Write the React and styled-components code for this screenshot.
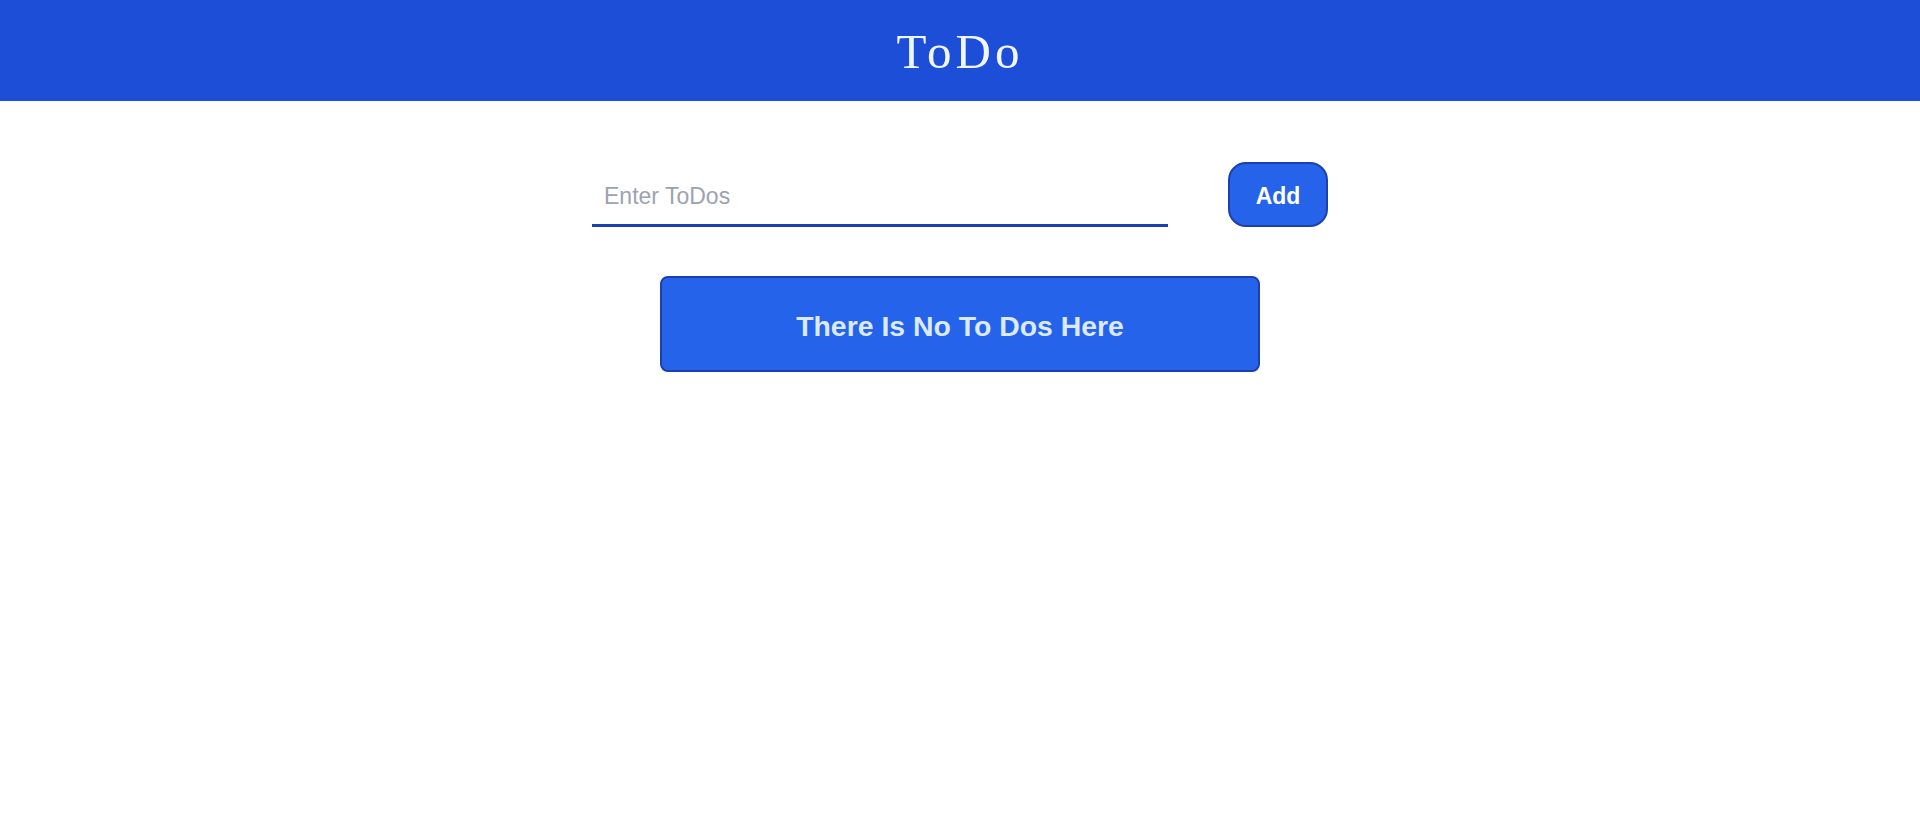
import React, { useState } from "react";
import styled, { createGlobalStyle } from "styled-components";

const GlobalStyle = createGlobalStyle`
  html, body {
    margin: 0;
    padding: 0;
    background: #ffffff;
    font-family: "Liberation Sans", Arial, sans-serif;
  }
  * { box-sizing: border-box; }
`;

const Header = styled.header`
  height: 101px;
  background: #1d4ed8;
  display: flex;
  align-items: center;
  justify-content: center;
`;

const Title = styled.h1`
  margin: 2px 0 0 0;
  font-family: "Liberation Serif", "Times New Roman", serif;
  font-weight: 400;
  font-size: 49px;
  letter-spacing: 4px;
  color: #eff6ff;
`;

const Main = styled.main`
  display: flex;
  flex-direction: column;
  align-items: center;
  padding-top: 61px;
  gap: 49px;
`;

const Form = styled.form`
  display: flex;
  align-items: flex-end;
  gap: 60px;
`;

const Input = styled.input`
  width: 576px;
  height: 60px;
  padding: 2px 12px 0;
  border: none;
  border-bottom: 3px solid #1e40af;
  outline: none;
  font-family: "Liberation Sans", Arial, sans-serif;
  font-size: 23px;
  color: #111827;
  background: transparent;
  &::placeholder {
    color: #9ca3af;
  }
`;

const AddButton = styled.button`
  width: 100px;
  height: 65px;
  padding: 3px 0 0;
  background: #2563eb;
  border: 2px solid #1e40af;
  border-radius: 18px;
  color: #ffffff;
  font-family: "Liberation Sans", Arial, sans-serif;
  font-weight: 700;
  font-size: 23px;
  cursor: pointer;
`;

const EmptyBox = styled.div`
  width: 600px;
  height: 96px;
  background: #2563eb;
  border: 2px solid #1e40af;
  border-radius: 8px;
  display: flex;
  align-items: center;
  justify-content: center;
  color: #dbeafe;
  font-weight: 700;
  font-size: 28.4px;
  padding-top: 4px;
`;

export default function App() {
  const [value, setValue] = useState("");
  return (
    <>
      <GlobalStyle />
      <Header>
        <Title>ToDo</Title>
      </Header>
      <Main>
        <Form onSubmit={(e) => e.preventDefault()}>
          <Input
            placeholder="Enter ToDos"
            value={value}
            onChange={(e) => setValue(e.target.value)}
          />
          <AddButton type="submit">Add</AddButton>
        </Form>
        <EmptyBox>There Is No To Dos Here</EmptyBox>
      </Main>
    </>
  );
}
